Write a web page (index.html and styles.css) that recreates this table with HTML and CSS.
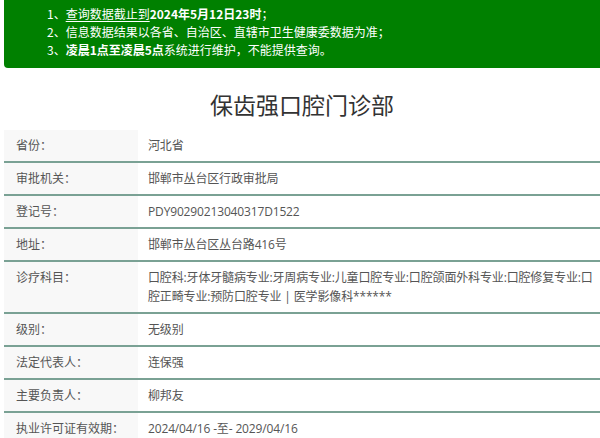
FILE: index.html
```html
<!DOCTYPE html>
<html lang="zh-CN">
<head>
<meta charset="utf-8">
<title>保齿强口腔门诊部</title>
<link rel="stylesheet" href="styles.css">
</head>
<body>
<div class="page">
  <div class="notice">
    <p>1、<u>查询数据截止到</u><b>2024年5月12日23时</b>；</p>
    <p>2、信息数据结果以各省、自治区、直辖市卫生健康委数据为准；</p>
    <p>3、<b>凌晨1点至凌晨5点</b>系统进行维护，不能提供查询。</p>
  </div>
  <h1 class="title">保齿强口腔门诊部</h1>
  <div class="info">
    <div class="row"><div class="label">省份：</div><div class="value">河北省</div></div>
    <div class="row"><div class="label">审批机关：</div><div class="value">邯郸市丛台区行政审批局</div></div>
    <div class="row"><div class="label">登记号：</div><div class="value">PDY90290213040317D1522</div></div>
    <div class="row"><div class="label">地址：</div><div class="value">邯郸市丛台区丛台路416号</div></div>
    <div class="row"><div class="label">诊疗科目：</div><div class="value">口腔科:牙体牙髓病专业:牙周病专业:儿童口腔专业:口腔颌面外科专业:口腔修复专业:口腔正畸专业:预防口腔专业 | 医学影像科******</div></div>
    <div class="row"><div class="label">级别：</div><div class="value">无级别</div></div>
    <div class="row"><div class="label">法定代表人：</div><div class="value">连保强</div></div>
    <div class="row"><div class="label">主要负责人：</div><div class="value">柳邦友</div></div>
    <div class="row"><div class="label">执业许可证有效期：</div><div class="value">2024/04/16 -至- 2029/04/16</div></div>
  </div>
</div>
</body>
</html>
```

FILE: styles.css
```css
html, body {
  margin: 0;
  padding: 0;
  background: #ffffff;
  overflow: hidden;
}

body {
  font-family: "Open Sans", "Noto Sans CJK SC", sans-serif;
  font-size: 12px;
  color: #555555;
}

.page {
  margin-left: 4px;
  width: 596px;
}

.notice {
  background: #008000;
  color: #ffffff;
  padding: 5px 0 9px 43px;
  border-radius: 0 0 0 4px;
}

.notice p {
  margin: 0;
  line-height: 18px;
  font-family: "Noto Sans CJK SC", sans-serif;
}

.notice b {
  font-weight: bold;
}

.notice u {
  text-decoration: underline;
  text-underline-offset: 2px;
}

.title {
  margin: 20px 0 10px;
  font-family: "Noto Sans CJK SC", sans-serif;
  font-weight: normal;
  font-size: 23px;
  line-height: 32px;
  color: #333333;
  text-align: center;
}

.info {
  display: flex;
  flex-direction: column;
}

.row {
  display: flex;
  border-bottom: 2px solid #7aa194;
}

.label {
  flex: 0 0 134px;
  box-sizing: border-box;
  padding: 6px 0 6px 12px;
  background: #f8f8f8;
  line-height: 19px;
}

.value {
  flex: 1;
  padding: 6px 0 6px 10px;
  line-height: 19px;
  letter-spacing: -0.15px;
}
```
